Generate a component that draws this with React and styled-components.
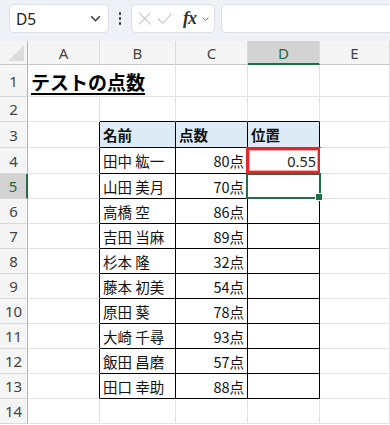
import styled, { createGlobalStyle } from "styled-components";

const GlobalStyle = createGlobalStyle`
  body {
    margin: 0;
    background: #ffffff;
    font-family: "Noto Sans", "Noto Sans CJK JP", sans-serif;
    overflow: hidden;
  }
`;

const Page = styled.div`
  width: 390px;
  height: 425px;
  overflow: hidden;
  background: #ffffff;
`;

const Toolbar = styled.div`
  height: 41px;
  box-sizing: border-box;
  background: #eef1f5;
  display: flex;
  align-items: flex-start;
  padding: 4px 0 0 9px;
  gap: 6px;
`;

const NameBox = styled.div`
  width: 100px;
  height: 29px;
  box-sizing: border-box;
  background: #ffffff;
  border: 1px solid #dcdfe4;
  border-radius: 5px;
  display: flex;
  align-items: center;
  justify-content: space-between;
  padding: 0 6px 0 6px;
  font-size: 15.5px;
  color: #222;
`;

const Dots = styled.div`
  width: 10px;
  height: 29px;
  display: flex;
  flex-direction: column;
  align-items: center;
  justify-content: center;
  gap: 2px;
  span {
    width: 2px;
    height: 3px;
    border-radius: 1px;
    background: #333;
  }
`;

const FuncBox = styled(NameBox)`
  width: 84px;
  padding: 0 4px 0 5px;
  justify-content: flex-start;
  gap: 5px;
`;

const Fx = styled.span`
  font-family: "Liberation Serif", "DejaVu Serif", serif;
  font-style: italic;
  font-weight: 700;
  font-size: 18px;
  color: #333;
  margin-left: 5px;
  letter-spacing: -1px;
`;

const FormulaBar = styled(NameBox)`
  flex: 1;
  border-right: none;
  border-radius: 5px 0 0 5px;
`;

const Sheet = styled.div`
  display: grid;
  grid-template-columns: 28px 72px 76px 72px 72px 70px;
  grid-template-rows: 24px 32px 25px 26px 26px repeat(10, 25px);
`;

const Corner = styled.div`
  position: relative;
  background: #f5f5f5;
  box-sizing: border-box;
  border-right: 1px solid #b5b5b5;
  border-bottom: 1px solid #c8c8c8;
  &::after {
    content: "";
    position: absolute;
    right: 3px;
    bottom: 3px;
    border-left: 16px solid transparent;
    border-bottom: 16px solid #dcdcdc;
  }
`;

const ColHead = styled.div`
  background: ${(p) => (p.$active ? "#d3d3d3" : "#f5f5f5")};
  box-sizing: border-box;
  border-right: 1px solid #dadada;
  border-bottom: ${(p) => (p.$active ? "2px solid #1e7145" : "1px solid #c8c8c8")};
  display: flex;
  align-items: center;
  justify-content: center;
  font-size: 15px;
  color: ${(p) => (p.$active ? "#1e6b40" : "#444")};
  padding-top: ${(p) => (p.$active ? "1px" : "0")};
`;

const RowHead = styled.div`
  background: ${(p) => (p.$active ? "#d3d3d3" : "#f5f5f5")};
  box-sizing: border-box;
  border-right: ${(p) => (p.$active ? "2px solid #1e7145" : "1px solid #b5b5b5")};
  border-bottom: 1px solid #dadada;
  display: flex;
  align-items: center;
  justify-content: center;
  font-size: 15px;
  color: ${(p) => (p.$active ? "#1e6b40" : "#444")};
`;

const Cell = styled.div`
  position: relative;
  box-sizing: border-box;
  background: ${(p) => p.$bg || "#ffffff"};
  border-right: 1px solid ${(p) => p.$right || "#e1e1e1"};
  border-bottom: 1px solid ${(p) => p.$bottom || "#e1e1e1"};
  display: flex;
  align-items: center;
  justify-content: ${(p) => (p.$align === "right" ? "flex-end" : "flex-start")};
  padding: 0 3px 0 3px;
  font-family: "Noto Sans CJK JP", sans-serif;
  font-size: 14.5px;
  font-weight: ${(p) => (p.$bold ? 700 : 400)};
  color: #111;
  white-space: nowrap;
  overflow: visible;
`;

const Title = styled.span`
  position: relative;
  z-index: 1;
  font-size: 19px;
  font-weight: 700;
  text-decoration: underline;
  text-decoration-thickness: 2px;
  text-underline-offset: 3px;
  color: #000;
  margin-top: 1px;
`;

const RedMark = styled.div`
  position: absolute;
  left: -2px;
  top: -1px;
  right: -2px;
  bottom: -1px;
  border: 3px solid #e5242b;
  box-shadow: inset 0 0 0 1px #f6aaaa;
  pointer-events: none;
`;

const Value = styled.span`
  position: relative;
  z-index: 1;
  font-family: "Noto Sans", sans-serif;
  color: #222;
`;

const Selection = styled.div`
  position: absolute;
  left: -2px;
  top: -1px;
  right: -2px;
  bottom: -1px;
  border: 2px solid #1e7145;
  pointer-events: none;
  z-index: 2;
  &::after {
    content: "";
    position: absolute;
    right: -4px;
    bottom: -4px;
    width: 6px;
    height: 6px;
    background: #1e7145;
    border: 1px solid #ffffff;
  }
`;

const Chevron = ({ size = 12, color = "#333" }) => (
  <svg width={size} height={size} viewBox="0 0 12 12">
    <polyline points="2,4 6,8 10,4" fill="none" stroke={color} strokeWidth="1.3" />
  </svg>
);

const scores = [
  ["田中 紘一", 80],
  ["山田 美月", 70],
  ["高橋 空", 86],
  ["吉田 当麻", 89],
  ["杉本 隆", 32],
  ["藤本 初美", 54],
  ["原田 葵", 78],
  ["大崎 千尋", 93],
  ["飯田 昌磨", 57],
  ["田口 幸助", 88],
];

const cols = ["A", "B", "C", "D", "E"];

const renderRow = (r) => {
  const inTable = r >= 3 && r <= 13;
  const cells = [];
  const data = r >= 4 && r <= 13 ? scores[r - 4] : null;

  cols.forEach((c) => {
    const key = `${c}${r}`;
    const isTableCol = c === "B" || c === "C" || c === "D";
    let right;
    let bottom;
    if (inTable && (isTableCol || c === "A")) right = "#000";
    if (inTable && isTableCol) bottom = "#000";
    if (r === 2 && isTableCol) bottom = "#000";
    if (r === 1 && c === "A") right = "transparent";

    let content = null;
    let align = "left";
    let bold = false;
    let bg;

    if (r === 1 && c === "A") content = <Title>テストの点数</Title>;
    if (r === 3 && isTableCol) {
      bg = "#ddebf7";
      bold = true;
      content = { B: "名前", C: "点数", D: "位置" }[c];
    }
    if (data && c === "B") content = data[0];
    if (data && c === "C") {
      align = "right";
      content = `${data[1]}点`;
    }
    if (r === 4 && c === "D") {
      align = "right";
      content = (
        <>
          <RedMark />
          <Value>0.55</Value>
        </>
      );
    }
    if (r === 5 && c === "D") content = <Selection />;

    cells.push(
      <Cell key={key} $right={right} $bottom={bottom} $bg={bg} $align={align} $bold={bold}>
        {content}
      </Cell>
    );
  });

  return [
    <RowHead key={`h${r}`} $active={r === 5}>
      {r}
    </RowHead>,
    ...cells,
  ];
};

const App = () => {
  const rows = Array.from({ length: 14 }, (_, i) => i + 1);
  return (
    <Page>
      <GlobalStyle />
      <Toolbar>
        <NameBox>
          <span>D5</span>
          <Chevron size={13} />
        </NameBox>
        <Dots>
          <span />
          <span />
          <span />
        </Dots>
        <FuncBox>
          <svg width="17" height="17" viewBox="0 0 16 16">
            <line x1="2" y1="2" x2="14" y2="14" stroke="#c4c4c4" strokeWidth="1.1" />
            <line x1="14" y1="2" x2="2" y2="14" stroke="#c4c4c4" strokeWidth="1.1" />
          </svg>
          <svg width="17" height="17" viewBox="0 0 16 16">
            <polyline points="1,8 6,13 15,3" fill="none" stroke="#c4c4c4" strokeWidth="1.1" />
          </svg>
          <Fx>fx</Fx>
          <Chevron size={10} color="#777" />
        </FuncBox>
        <FormulaBar />
      </Toolbar>
      <Sheet>
        <Corner />
        {cols.map((c) => (
          <ColHead key={c} $active={c === "D"}>
            {c}
          </ColHead>
        ))}
        {rows.map((r) => renderRow(r))}
      </Sheet>
    </Page>
  );
};

export default App;
